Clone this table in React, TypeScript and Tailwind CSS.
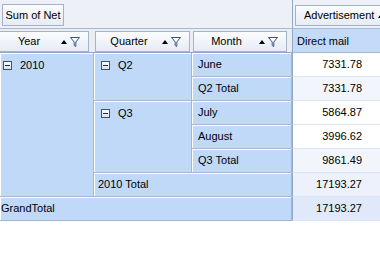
import React from "react";

const cell =
  "bg-[#c0d9f9] border-r border-b border-[#a3b7d2] shadow-[inset_1px_1px_0_#ffffff] text-black";

const Expand = () => (
  <span className="inline-flex w-[9px] h-[9px] border border-[#3f5070] bg-gradient-to-b from-white to-[#d6e2f2] items-center justify-center shrink-0">
    <span className="block w-[5px] h-px bg-[#1e2a40]" />
  </span>
);

const SortFilter = () => (
  <span className="flex items-center gap-[3px]">
    <svg width="6" height="4" viewBox="0 0 6 4">
      <path d="M0 4 L3 0 L6 4 Z" fill="#000" />
    </svg>
    <svg width="10" height="10" viewBox="0 0 10 10">
      <path d="M0.5 0.5 H9.5 L5.8 5 V9.5 L4.2 8.5 V5 Z" fill="#fff" stroke="#3d5480" strokeWidth="1" />
    </svg>
  </span>
);

const FieldHeader = ({ label, cls }: { label: string; cls: string }) => (
  <div
    className={`${cls} h-[21px] flex items-center border border-[#a2b3ca] bg-gradient-to-b from-[#fbfcfe] to-[#e6ecf5] pr-[8px]`}
  >
    <span className="flex-1 text-center">{label}</span>
    <SortFilter />
  </div>
);

const Value = ({ v, bg }: { v: string; bg: string }) => (
  <div className={`${bg} border-b border-[#dde5f0] flex items-center justify-end pr-[18px]`}>{v}</div>
);

export default function App() {
  return (
    <div
      className="w-[380px] h-[266px] bg-white overflow-hidden text-[11px] leading-none"
      style={{ fontFamily: '"Liberation Sans", Arial, sans-serif' }}
    >
      <div className="grid grid-cols-[94px_98px_100px_88px] grid-rows-[29px_24px_repeat(7,24px)]">
        {/* top filter area */}
        <div className="col-span-3 bg-[#edf1f7] border-b border-[#a9b9cf] pt-[4px] pl-[2px]">
          <div className="inline-flex h-[22px] w-[62px] items-center justify-center border border-[#a2b3ca] bg-gradient-to-b from-[#fbfcfe] to-[#e6ecf5]">
            Sum of Net
          </div>
        </div>
        <div className="bg-[#edf1f7] border-l border-[#93a8c6] border-b border-b-[#a9b9cf] pt-[5px] pl-[2px] overflow-hidden">
          <div className="flex h-[21px] w-[100px] items-center border border-[#a2b3ca] bg-gradient-to-b from-[#fbfcfe] to-[#e6ecf5] pl-[8px] gap-[4px]">
            Advertisement
            <svg width="6" height="4" viewBox="0 0 6 4">
              <path d="M0 4 L3 0 L6 4 Z" fill="#000" />
            </svg>
          </div>
        </div>

        {/* field header row */}
        <div className="bg-[#e9eef5] border-b border-[#92a7c4] pt-[2px] overflow-hidden">
          <FieldHeader label="Year" cls="ml-[-4px] w-[93px]" />
        </div>
        <div className="bg-[#e9eef5] border-b border-[#92a7c4] pt-[2px]">
          <FieldHeader label="Quarter" cls="ml-[1px] w-[95px]" />
        </div>
        <div className="bg-[#e9eef5] border-b border-[#92a7c4] pt-[2px]">
          <FieldHeader label="Month" cls="ml-[1px] w-[94px]" />
        </div>
        <div className="bg-[#c3dbf9] border-l border-[#93a8c6] border-b border-b-[#a3b7d2] pl-[4px] pt-[7px]">
          Direct mail
        </div>

        {/* row area */}
        <div className={`${cell} row-span-6 flex items-start gap-[8px] pl-[3px] pt-[8px]`}>
          <Expand />
          <span className="-mt-[1px]">2010</span>
        </div>
        <div className={`${cell} row-span-2 flex items-start gap-[8px] pl-[7px] pt-[8px]`}>
          <Expand />
          <span className="-mt-[1px]">Q2</span>
        </div>
        <div className={`${cell} flex items-center pl-[6px]`}>June</div>
        <Value v="7331.78" bg="bg-white border-l border-l-[#93a8c6]" />
        <div className={`${cell} flex items-center pl-[6px]`}>Q2 Total</div>
        <Value v="7331.78" bg="bg-[#f2f5fc] border-l border-l-[#93a8c6]" />

        <div className={`${cell} row-span-3 flex items-start gap-[8px] pl-[7px] pt-[8px]`}>
          <Expand />
          <span className="-mt-[1px]">Q3</span>
        </div>
        <div className={`${cell} flex items-center pl-[6px]`}>July</div>
        <Value v="5864.87" bg="bg-white border-l border-l-[#93a8c6]" />
        <div className={`${cell} flex items-center pl-[6px]`}>August</div>
        <Value v="3996.62" bg="bg-white border-l border-l-[#93a8c6]" />
        <div className={`${cell} flex items-center pl-[6px]`}>Q3 Total</div>
        <Value v="9861.49" bg="bg-[#f2f5fc] border-l border-l-[#93a8c6]" />

        <div className={`${cell} col-span-2 flex items-center pl-[4px]`}>2010 Total</div>
        <Value v="17193.27" bg="bg-[#ecf1fb] border-l border-l-[#93a8c6]" />

        <div className={`${cell} col-span-3 flex items-center pl-[1px]`}>GrandTotal</div>
        <Value v="17193.27" bg="bg-[#dfe9f9] border-l border-l-[#93a8c6]" />
      </div>
    </div>
  );
}
